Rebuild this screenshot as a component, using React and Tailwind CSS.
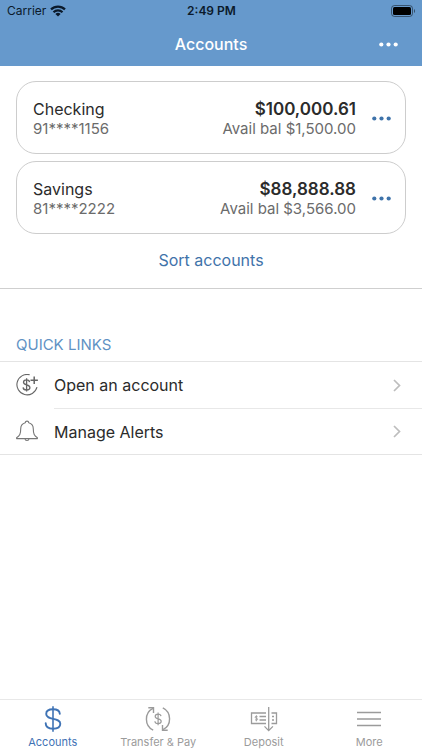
import React, { useState } from 'react';

const accounts = [
  { name: 'Checking', number: '91****1156', balance: '$100,000.61', available: '$1,500.00' },
  { name: 'Savings', number: '81****2222', balance: '$88,888.88', available: '$3,566.00' },
];

const quickLinks = [
  { label: 'Open an account', icon: OpenAccountIcon },
  { label: 'Manage Alerts', icon: BellIcon },
];

const tabs = [
  { label: 'Accounts', icon: DollarIcon },
  { label: 'Transfer & Pay', icon: TransferIcon },
  { label: 'Deposit', icon: DepositIcon },
  { label: 'More', icon: MenuIcon },
];

function WifiIcon() {
  return (
    <svg width="16" height="12" viewBox="0 0 16 12" fill="none" stroke="currentColor" strokeWidth="2.2">
      <path d="M1 4.4a10 10 0 0 1 14 0" />
      <path d="M3.5 7.3a6.4 6.4 0 0 1 9 0" />
      <path d="M8 11.6 5.4 9a3.7 3.7 0 0 1 5.2 0z" fill="currentColor" stroke="none" />
    </svg>
  );
}

function BatteryIcon() {
  return (
    <svg width="25" height="12" viewBox="0 0 25 12">
      <rect x="0.5" y="0.5" width="21" height="11" rx="3" fill="none" stroke="#000" strokeOpacity="0.45" />
      <rect x="2" y="2" width="18" height="8" rx="1.5" fill="#000" />
      <path d="M23 4v4c1.4-.6 1.4-3.4 0-4z" fill="#000" fillOpacity="0.5" />
    </svg>
  );
}

function DotsIcon() {
  return (
    <svg width="19" height="5" viewBox="0 0 19 5" fill="currentColor">
      <circle cx="2.3" cy="2.5" r="2.1" />
      <circle cx="9.5" cy="2.5" r="2.1" />
      <circle cx="16.7" cy="2.5" r="2.1" />
    </svg>
  );
}

function ChevronIcon() {
  return (
    <svg width="8" height="13" viewBox="0 0 8 13" fill="none" stroke="#bdbdbd" strokeWidth="1.7">
      <path d="m1 1 5.5 5.5L1 12" />
    </svg>
  );
}

function OpenAccountIcon() {
  return (
    <svg width="22" height="22" viewBox="0 0 22 22" fill="none" stroke="#666" strokeWidth="1.1">
      <path d="M13.7.8A10.2 10.2 0 1 0 21 13.2" />
      <path
        d="M13.6 8.2c-.2-1.5-1.3-2.3-3-2.3-1.9 0-3.1.9-3.1 2.4 0 3.4 6.400 1.800 6.400 5.200 0 1.600-1.300 2.500-3.300 2.500s-3.400-.9-3.500-2.600M10.600 4.300v13.300"
        strokeWidth="1.3"
      />
      <path d="M18.200 2.500v7.400M14.500 6.200h7.400" strokeWidth="1.5" />
    </svg>
  );
}

function BellIcon() {
  return (
    <svg width="22" height="22" viewBox="0 0 22 22" fill="none" stroke="#777" strokeWidth="1.1">
      <path
        d="M9.300 2.700C9.300.6 12.700.6 12.700 2.700c3.300.8 4.600 3.200 4.600 6.300 0 5.300 1 6.600 4.100 8.700v.9H.6v-.9c3.100-2.100 4.100-3.400 4.100-8.700 0-3.100 1.300-5.500 4.600-6.300z"
        strokeLinejoin="round"
      />
      <path d="M9 18.800c.2 2.300 3.800 2.300 4 0" />
    </svg>
  );
}

function DollarIcon() {
  return (
    <svg width="28" height="26" viewBox="0 0 28 26" fill="none" stroke="currentColor" strokeWidth="1.9">
      <path
        d="M20.800 7.800C20.600 4.800 18 3.300 14 3.300c-4.200 0-6.800 1.800-6.800 4.600 0 6.700 14.100 3.100 14.100 9.900 0 3.200-2.800 4.900-7.200 4.900-4.700 0-7.400-2-7.400-5.400"
        strokeLinecap="round"
      />
      <path d="M14 .3v25.400" strokeWidth="1.6" />
    </svg>
  );
}

function TransferIcon() {
  return (
    <svg width="28" height="26" viewBox="0 0 28 26" fill="none" stroke="currentColor" strokeWidth="1.4">
      <path d="M9.200 24.200C.2 19.800.2 6.600 9 2.300" />
      <path d="M4.300 1.800h5.200v5.200" />
      <path d="M18.800 1.800c9 4.400 9 17.600.2 21.900" />
      <path d="M23.700 24.200h-5.200v-5.200" />
      <path
        d="M17 10.200c-.2-1.300-1.300-2-2.900-2-1.800 0-2.900.8-2.900 2.200 0 3.200 6 1.700 6 4.900 0 1.400-1.200 2.300-3.100 2.300s-3.100-.9-3.200-2.400M14.100 6.500v12.800"
        strokeWidth="1.2"
      />
    </svg>
  );
}

function DepositIcon() {
  return (
    <svg width="28" height="26" viewBox="0 0 28 26" fill="none" stroke="currentColor" strokeWidth="1.3">
      <path d="M16 17.500H1.500V7H16M21.500 7h5v10.500h-5" />
      <path d="M9.500 10.500H16M9.500 14H16M22 10.500h2M22 14h2" />
      <path d="M7.600 10.800c-.6-.8-2.500-.7-2.500.4 0 1.300 2.600.8 2.600 2 0 1.100-2 1.200-2.700.3M6.400 9.300v6" strokeWidth="0.9" />
      <path d="M18.700 1v23.500M14.500 20.400l4.200 4.200 4.200-4.200" />
    </svg>
  );
}

function MenuIcon() {
  return (
    <svg width="28" height="26" viewBox="0 0 28 26" fill="none" stroke="currentColor" strokeWidth="1.4">
      <path d="M2 6.500h24M2 13h24M2 19.500h24" />
    </svg>
  );
}

function AccountCard({ account }) {
  return (
    <li className="flex items-center rounded-[20px] border border-[#cdcdcd] pt-4 pr-3.5 pb-[15px] pl-4">
      <div className="flex-1">
        <p className="text-base leading-[22px] text-[#2b2b2b]">{account.name}</p>
        <p className="text-[15px] leading-[18px] text-[#6b6b6b]">{account.number}</p>
      </div>
      <div className="text-right">
        <p className="text-[17px] leading-[22px] font-semibold text-[#2b2b2b]">{account.balance}</p>
        <p className="text-[15px] leading-[18px] text-[#6b6b6b]">Avail bal {account.available}</p>
      </div>
      <button type="button" aria-label={`${account.name} options`} className="ml-4 text-[#3f73aa]">
        <DotsIcon />
      </button>
    </li>
  );
}

export default function App() {
  const [activeTab, setActiveTab] = useState('Accounts');

  return (
    <div className="flex min-h-screen flex-col bg-white font-['Inter',sans-serif]">
      <header className="bg-[#6699cc]">
        {/* Status bar */}
        <div className="grid h-[22px] grid-cols-3 items-center pr-1.5 pl-[7px] text-xs text-[#0b1a2b]">
          <div className="flex items-center gap-1">
            <span>Carrier</span>
            <WifiIcon />
          </div>
          <span className="text-center font-semibold">2:49 PM</span>
          <div className="flex justify-end">
            <BatteryIcon />
          </div>
        </div>
        {/* Title bar */}
        <div className="grid h-11 grid-cols-[1fr_auto_1fr] items-center px-6 text-white">
          <h1 className="col-start-2 text-base font-medium">Accounts</h1>
          <button type="button" aria-label="More options" className="justify-self-end">
            <DotsIcon />
          </button>
        </div>
      </header>

      <main className="flex-1">
        <section className="border-b border-[#cfcfcf] px-4 pt-[15px] pb-4">
          <ul className="flex flex-col gap-[7px]">
            {accounts.map((account) => (
              <AccountCard key={account.name} account={account} />
            ))}
          </ul>
          <button type="button" className="mx-auto mt-3.5 block text-base leading-6 text-[#3f73aa]">
            Sort accounts
          </button>
        </section>

        <section>
          <h2 className="px-4 pt-12 pb-2 text-[15px] leading-4 text-[#5f92c4]">QUICK LINKS</h2>
          <ul className="border-y border-[#e4e4e4]">
            {quickLinks.map(({ label, icon: Icon }, index) => (
              <li key={label}>
                <a href="#" className="flex items-center gap-4 pl-4">
                  <Icon />
                  <span
                    className={
                      'flex h-[46px] flex-1 items-center justify-between pr-[21px] text-base text-[#2b2b2b] ' +
                      (index > 0 ? 'border-t border-[#e8e8e8]' : '')
                    }
                  >
                    {label}
                    <ChevronIcon />
                  </span>
                </a>
              </li>
            ))}
          </ul>
        </section>
      </main>

      <nav className="grid grid-cols-4 border-t border-[#e8e8e8]">
        {tabs.map(({ label, icon: Icon }) => (
          <button
            key={label}
            type="button"
            onClick={() => setActiveTab(label)}
            className={
              'flex flex-col items-center gap-1 pt-1.5 pb-[2px] text-[11px] leading-3 ' +
              (activeTab === label ? 'text-[#3f73b5]' : 'text-[#9b9b9b]')
            }
          >
            <Icon />
            {label}
          </button>
        ))}
      </nav>
    </div>
  );
}
